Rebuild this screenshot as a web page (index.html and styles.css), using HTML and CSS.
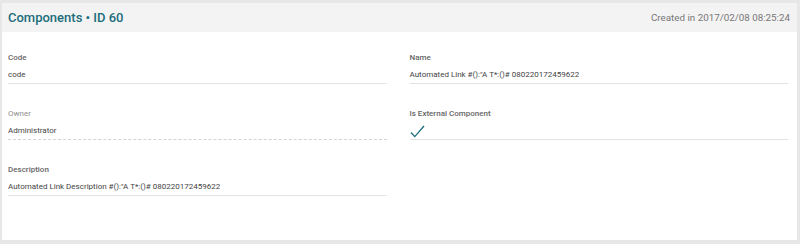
FILE: index.html
```html
<!DOCTYPE html>
<html lang="en">
<head>
    <meta charset="UTF-8">
    <title>Components - ID 60</title>
    <link rel="stylesheet" href="styles.css">
</head>
<body>

<div class="panel">
    <div class="panel-header">
        <h1>Components &bull; ID 60</h1>
        <span class="created">Created in 2017/02/08 08:25:24</span>
    </div>

    <div class="form">
        <div class="field">
            <label>Code</label>
            <div class="value">code</div>
        </div>
        <div class="field">
            <label>Name</label>
            <div class="value">Automated Link #():"A T*:()# 080220172459622</div>
        </div>
        <div class="field readonly">
            <label>Owner</label>
            <div class="value">Administrator</div>
        </div>
        <div class="field">
            <label>Is External Component</label>
            <div class="value check">
                <svg width="15" height="13" viewBox="0 0 15 13"><path d="M1 7.5 L4.8 11.6 L14 1" fill="none" stroke="#1b6d7c" stroke-width="1.3"/></svg>
            </div>
        </div>
        <div class="field">
            <label>Description</label>
            <div class="value">Automated Link Description #():"A T*:()# 080220172459622</div>
        </div>
    </div>
</div>

</body>
</html>
```

FILE: styles.css
```css
html, body {
    height: 100%;
}
body {
    font-family: Roboto, "Liberation Sans", sans-serif;
    background: #e7e7e7;
    margin: 0;
    padding: 3px 3px 4px 2px;
    box-sizing: border-box;
}
.panel {
    background: #fff;
    height: 100%;
}
.panel-header {
    display: flex;
    justify-content: space-between;
    align-items: center;
    height: 29px;
    padding: 0 7px 0 6px;
    background: #f3f3f3;
}
h1 {
    margin: 0;
    font-size: 13px;
    font-weight: 500;
    color: #1b6d7c;
}
.created {
    font-size: 9.8px;
    color: #777;
}
.form {
    display: grid;
    grid-template-columns: 1fr 1fr;
    column-gap: 23px;
    row-gap: 25px;
    padding: 21px 9px 0 6px;
}
.field label {
    display: block;
    font-size: 8px;
    line-height: 10px;
    font-weight: 500;
    color: #666;
    margin-bottom: 7px;
}
.field .value {
    font-size: 8px;
    line-height: 10px;
    color: #444;
    padding-bottom: 3px;
    border-bottom: 1px solid #e2e2e2;
}
.field.readonly label {
    font-weight: normal;
    color: #8f8f8f;
}
.field.readonly .value {
    border-bottom: 1px dashed #d4d4d4;
}
.value.check {
    display: flex;
    align-items: flex-end;
    height: 10px;
}
.value.check svg {
    display: block;
    margin-bottom: -2px;
}
```
